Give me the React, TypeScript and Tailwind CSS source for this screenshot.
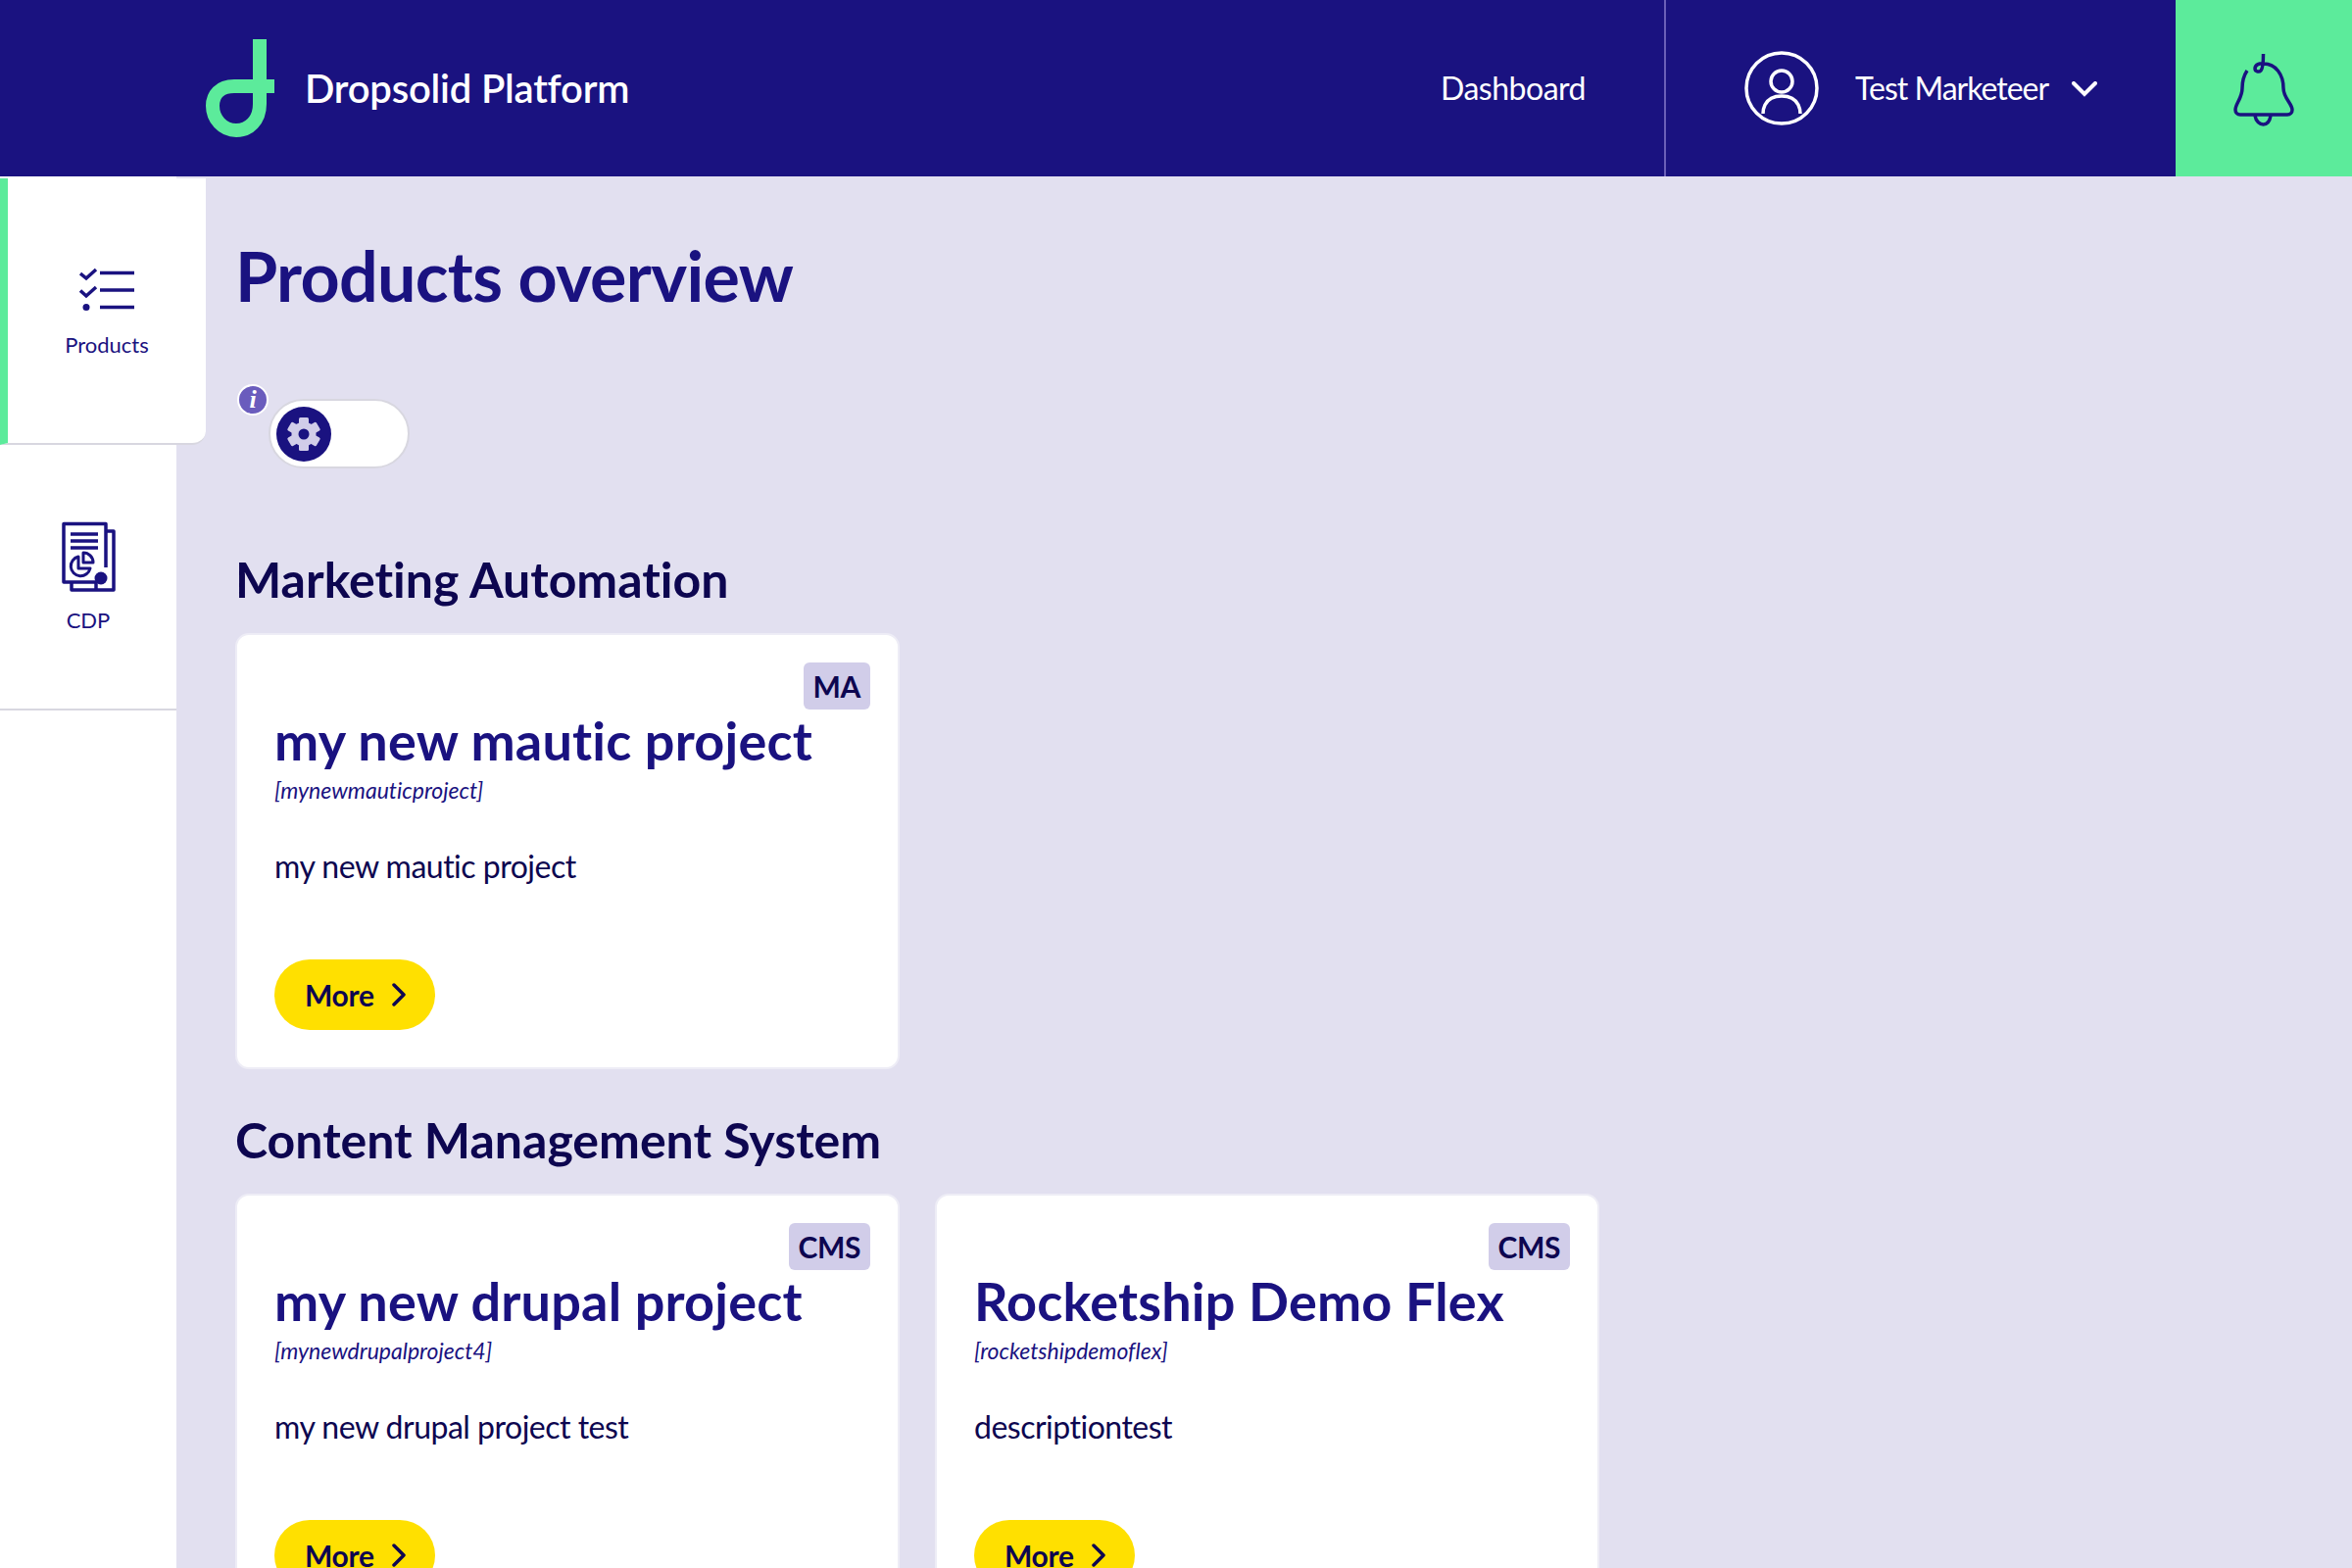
import React from 'react';

const PROJECTS_MA = [
  { badge: 'MA', title: 'my new mautic project', machine: '[mynewmauticproject]', description: 'my new mautic project' },
];

const PROJECTS_CMS = [
  { badge: 'CMS', title: 'my new drupal project', machine: '[mynewdrupalproject4]', description: 'my new drupal project test' },
  { badge: 'CMS', title: 'Rocketship Demo Flex', machine: '[rocketshipdemoflex]', description: 'descriptiontest' },
];

const Logo = () => (
  <svg width="72" height="100" viewBox="0 0 72 100" fill="none" className="shrink-0">
    <path d="M57 0V66C57 83 46 93 33 93C19 93 9 81 9 68C9 57 16 48 31 48H72" stroke="#5CEB9B" strokeWidth="14" />
  </svg>
);

const UserIcon = () => (
  <svg width="76" height="76" viewBox="0 0 76 76" fill="none" stroke="#fff" strokeWidth="3.5" className="shrink-0">
    <circle cx="38" cy="38" r="36" />
    <circle cx="38" cy="31" r="11" />
    <path d="M19 64C19 61 19 59 21 55C24 49 30 46 38 46C46 46 52 49 55 55C57 59 57 61 57 64" />
  </svg>
);

const BellIcon = () => (
  <svg width="100" height="100" viewBox="0 0 100 100" fill="none" stroke="#1A1280" strokeWidth="3.5">
    <path d="M33 32C29 38 28 44 28 50C28 60 21 66 21 72C21 75 23 77 26 77H74C77 77 79 75 79 72C79 66 70 60 70 50C70 36 62 25 50 25C46 24 41 26 41 30C41 33 45 34 47 32C49 30 49.500 26 49.500 15" />
    <path d="M41 78C42 84 46 87 49.500 87C53 87 56 84 57 78" />
  </svg>
);

const ChecklistIcon = () => (
  <svg width="56" height="44" viewBox="0 0 56 44" fill="none" stroke="#1A1280" strokeWidth="3.500">
    <path d="M1 6L7 11L17 2M1 23.500L7 29L17 20" />
    <path d="M21 5.500H56M21 23H56M21 40.500H56" />
    <circle cx="7" cy="40.500" r="3.500" fill="#1A1280" stroke="none" />
  </svg>
);

const ReportIcon = () => (
  <svg width="56" height="72" viewBox="0 0 56 72" fill="none" stroke="#1A1280" strokeWidth="3.500" strokeLinejoin="round">
    <path d="M46 47V2.500H3V62H36" />
    <path d="M47 10H54V70H11V62" />
    <path d="M10 13H38M10 20H38M10 27H38" />
    <path d="M18 36A10 10 0 1 0 30 48H18Z" strokeWidth="3" />
    <path d="M23 32A10 10 0 0 1 33 42H23Z" strokeWidth="3" />
    <circle cx="41" cy="58" r="6.500" fill="#1A1280" stroke="none" />
    <path d="M36 62V70" />
  </svg>
);

const GearIcon = () => (
  <svg width="36" height="36" viewBox="0 0 36 36" fill="#D1CDE9">
    <g>
      <rect x="13" y="1" width="10" height="34" rx="1.500" />
      <rect x="13" y="1" width="10" height="34" rx="1.500" transform="rotate(60 18 18)" />
      <rect x="13" y="1" width="10" height="34" rx="1.500" transform="rotate(120 18 18)" />
    </g>
    <circle cx="18" cy="18" r="12.500" />
    <circle cx="18" cy="18" r="5.500" fill="#1A1280" />
  </svg>
);

const ChevronRight = () => (
  <svg width="14" height="24" viewBox="0 0 14 24" fill="none" stroke="#0D0650" strokeWidth="3.500" strokeLinecap="round" strokeLinejoin="round" className="shrink-0">
    <path d="M2 2L12 12L2 22" />
  </svg>
);

type Project = { badge: string; title: string; machine: string; description: string };

const ProjectCard = ({ project }: { project: Project }) => (
  <div className="relative h-[445px] rounded-[14px] border-2 border-[#eeedf6] bg-white pl-[38px] pt-[74px]">
    <span className="absolute right-[28px] top-[28px] flex h-[48px] items-center rounded-[6px] bg-[#d1cde9] px-[10px] text-[30px] font-bold tracking-[-0.4px] text-[#0d0650]">
      {project.badge}
    </span>
    <h3 className="text-[54px] font-bold leading-[68px] tracking-[0.2px] text-[#1a1280]">{project.title}</h3>
    <p className="mt-[1px] text-[23px] italic leading-[30px] text-[#1a1280]">{project.machine}</p>
    <p className="mt-[40px] text-[32px] leading-[46px] tracking-[-0.5px] text-[#0d0650]">{project.description}</p>
    <a className="mt-[72px] flex h-[72px] w-[164px] items-center gap-[18px] rounded-full bg-[#ffe000] pl-[31px] text-[30px] font-bold tracking-[-0.3px] text-[#0d0650]">
      More
      <ChevronRight />
    </a>
  </div>
);

const Section = ({ title, projects }: { title: string; projects: Project[] }) => (
  <section className="mt-[40px] first:mt-0">
    <h2 className="text-[50px] font-bold leading-[64px] text-[#0d0650]">{title}</h2>
    <div className="mt-[23px] flex gap-[36px]">
      {projects.map((project) => (
        <div key={project.machine} className="w-[678px]">
          <ProjectCard project={project} />
        </div>
      ))}
    </div>
  </section>
);

export default function App() {
  return (
    <div className="flex h-[1600px] w-full flex-col overflow-hidden bg-[#e2e0f0] font-['Lato',sans-serif] [font-variant-ligatures:none]">
      <header className="flex h-[180px] shrink-0 items-center bg-[#1a1280] text-white">
        <div className="ml-[208px] flex items-center gap-[31px]">
          <Logo />
          <span className="text-[40px] font-semibold tracking-[-0.2px]">Dropsolid Platform</span>
        </div>
        <nav className="ml-auto mr-[80px] text-[32px] tracking-[-0.5px]">Dashboard</nav>
        <div className="flex h-full w-[522px] items-center border-l-2 border-[#6a5fb8] pl-[80px]">
          <UserIcon />
          <span className="ml-[37px] text-[32px] tracking-[-1px]">Test Marketeer</span>
          <svg width="26" height="16" viewBox="0 0 26 16" fill="none" stroke="#fff" strokeWidth="4" strokeLinecap="round" className="ml-[24px] mt-[2px]">
            <path d="M2 2L13 13L24 2" />
          </svg>
        </div>
        <div className="flex h-full w-[180px] items-center justify-center bg-[#5ceb9b]">
          <BellIcon />
        </div>
      </header>

      <div className="flex min-h-0 flex-1">
        <aside className="w-[180px] shrink-0 bg-white">
          <div className="mt-[2px] flex h-[272px] w-[210px] flex-col items-center rounded-br-[14px] border-b-2 border-l-[8px] border-b-[#d8d7e0] border-l-[#5ceb9b] bg-white pt-[91px]">
            <ChecklistIcon />
            <span className="mt-[20px] text-[22px] leading-[30px] text-[#1a1280]">Products</span>
          </div>
          <div className="flex h-[271px] flex-col items-center border-b-2 border-[#d8d7e0] pt-[78px]">
            <ReportIcon />
            <span className="mt-[14px] text-[22px] leading-[30px] text-[#1a1280]">CDP</span>
          </div>
        </aside>

        <main className="min-w-0 flex-1 pl-[60px]">
          <h1 className="mt-[51px] text-[70px] font-bold leading-[100px] tracking-[-0.7px] text-[#1a1280]">Products overview</h1>

          <div className="relative mt-[61px] h-[87px]">
            <span className="absolute left-[2px] top-0 z-10 flex h-[32px] w-[32px] items-center justify-center rounded-full border-2 border-white bg-[#6a5cbd] font-['Liberation_Serif',serif] text-[26px] font-bold italic leading-none text-white">
              i
            </span>
            <div className="absolute left-[34px] top-[15px] flex h-[71px] w-[144px] items-center rounded-full border-2 border-[#d8d7e0] bg-white pl-[6px]">
              <span className="flex h-[56px] w-[56px] items-center justify-center rounded-full bg-[#1a1280]">
                <GearIcon />
              </span>
            </div>
          </div>

          <div className="mt-[80px]">
            <Section title="Marketing Automation" projects={PROJECTS_MA} />
            <Section title="Content Management System" projects={PROJECTS_CMS} />
          </div>
        </main>
      </div>
    </div>
  );
}
